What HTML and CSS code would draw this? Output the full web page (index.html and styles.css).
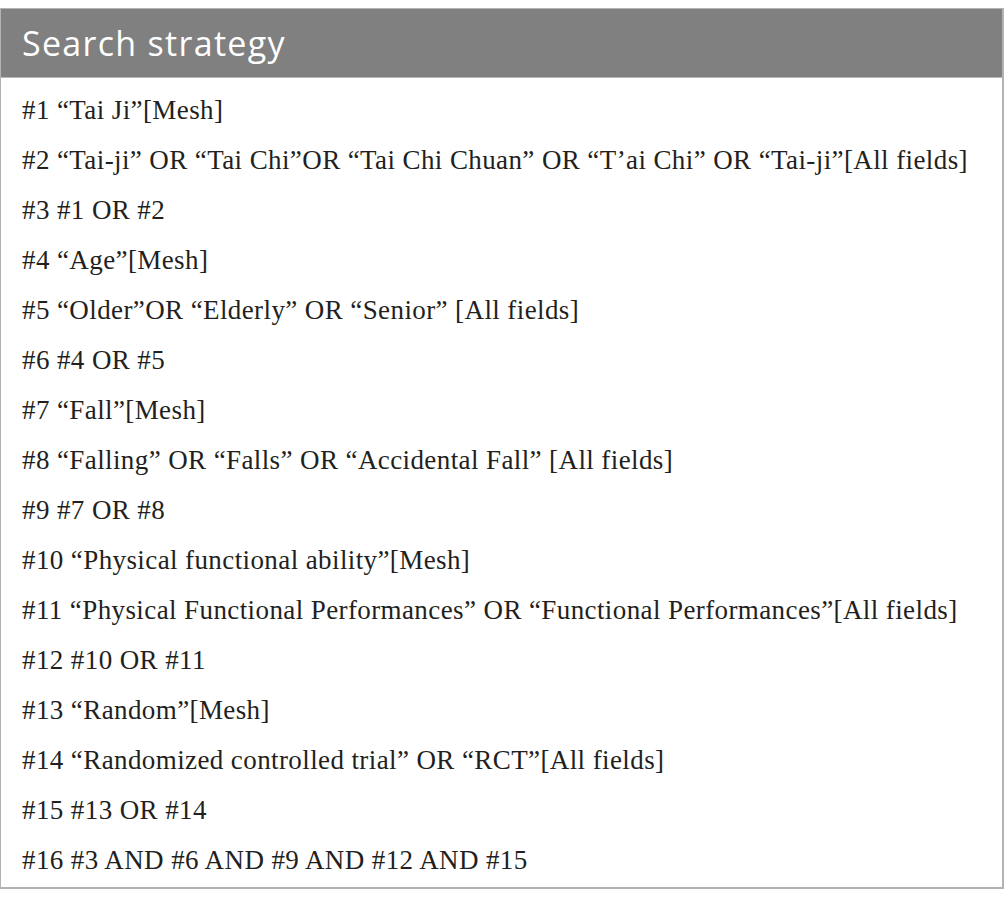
FILE: index.html
```html
<!DOCTYPE html>
<html>
<head>
<meta charset="utf-8">
<link rel="stylesheet" href="styles.css">
</head>
<body>
<div class="table">
  <div class="head">Search strategy</div>
  <div class="body">
    <div class="row">#1 “Tai Ji”[Mesh]</div>
    <div class="row">#2 “Tai-ji” OR “Tai Chi”OR “Tai Chi Chuan” OR “T’ai Chi” OR “Tai-ji”[All fields]</div>
    <div class="row">#3 #1 OR #2</div>
    <div class="row">#4 “Age”[Mesh]</div>
    <div class="row">#5 “Older”OR “Elderly” OR “Senior” [All fields]</div>
    <div class="row">#6 #4 OR #5</div>
    <div class="row">#7 “Fall”[Mesh]</div>
    <div class="row">#8 “Falling” OR “Falls” OR “Accidental Fall” [All fields]</div>
    <div class="row">#9 #7 OR #8</div>
    <div class="row">#10 “Physical functional ability”[Mesh]</div>
    <div class="row">#11 “Physical Functional Performances” OR “Functional Performances”[All fields]</div>
    <div class="row">#12 #10 OR #11</div>
    <div class="row">#13 “Random”[Mesh]</div>
    <div class="row">#14 “Randomized controlled trial” OR “RCT”[All fields]</div>
    <div class="row">#15 #13 OR #14</div>
    <div class="row">#16 #3 AND #6 AND #9 AND #12 AND #15</div>
  </div>
</div>
</body>
</html>
```
FILE: styles.css
```css
html, body {
  margin: 0;
  padding: 0;
  background: #ffffff;
}
body {
  padding-top: 8px;
}
.table {
  width: 1004px;
  box-sizing: border-box;
  border: 1px solid #b3b3b3;
  border-right-width: 2px;
  border-bottom-width: 2px;
}
.head {
  background: #7f807f;
  color: #ffffff;
  font-family: "Open Sans", sans-serif;
  font-size: 34px;
  height: 68px;
  line-height: 68px;
  padding-left: 21px;
  border-bottom: 1px solid #b8b8b8;
  letter-spacing: 1.3px;
}
.body {
  padding: 7px 0 2px 0;
}
.row {
  font-family: "Liberation Serif", "Times New Roman", serif;
  font-size: 27px;
  letter-spacing: 0.4px;
  line-height: 50px;
  height: 50px;
  padding-left: 21px;
  color: #231f20;
  white-space: nowrap;
}
```
